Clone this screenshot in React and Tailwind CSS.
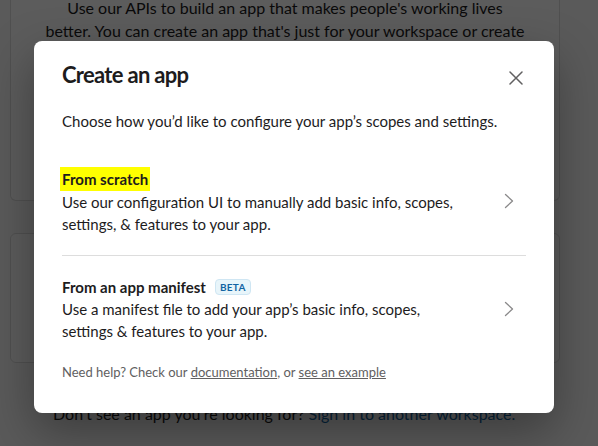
import React from "react";

function Chevron() {
  return (
    <svg width="10" height="16" viewBox="0 0 10 16" fill="none" className="shrink-0 mr-[12px]">
      <path d="M1.5 1.5L8.5 8L1.5 14.5" stroke="#8a898a" strokeWidth="1.3" strokeLinecap="round" strokeLinejoin="round" />
    </svg>
  );
}

function Option({ title, badge, desc, highlight }) {
  return (
    <button className="w-full flex items-center justify-between py-5 text-left cursor-pointer">
      <div className="w-[400px]">
        <div className="flex items-center text-[15px] leading-[22px] font-bold text-[#1d1c1d]">
          {highlight ? (
            <span className="bg-[#ffff00] px-[2px] -ml-[2px] py-[1px]">{title}</span>
          ) : (
            <span>{title}</span>
          )}
          {badge && (
            <span className="ml-[9px] h-[16px] px-[4px] flex items-center rounded-[4px] border border-[#cfe6f3] bg-[#e8f5fa] text-[#1264a3] text-[10px] font-bold tracking-[0.3px]">
              {badge}
            </span>
          )}
        </div>
        <p className="text-[15px] leading-[22px] text-[#1d1c1d]">{desc}</p>
      </div>
      <Chevron />
    </button>
  );
}

export default function App() {
  return (
    <div className="relative w-[598px] h-[446px] overflow-hidden bg-[#f8f8f8]" style={{ fontFamily: "Lato, 'Noto Sans', sans-serif" }}>
      {/* page behind the modal */}
      <div className="ml-[10px] w-[550px]">
        <div className="h-[205px] bg-white border-x border-b border-[#dddddd] rounded-b-[6px]">
          <p className="-mt-[4px] mx-auto w-[480px] text-center text-[16px] leading-[23px] text-[#1d1c1d]">
            Use our APIs to build an app that makes people's working lives better. You can create an app that's just for your workspace or create
          </p>
        </div>
        <div className="mt-[32px] h-[130px] bg-white border border-[#dddddd] rounded-[6px]"></div>
        <p className="mt-[39px] ml-[43px] text-[16px] leading-[23px] text-[#1d1c1d]">
          Don't see an app you're looking for? <span className="text-[#1264a3]">Sign in to another workspace.</span>
        </p>
      </div>

      {/* overlay */}
      <div className="absolute inset-0 bg-black/[0.64]"></div>

      {/* modal */}
      <div className="absolute left-[34px] top-[41px] w-[520px] bg-white rounded-[8px] shadow-[0_18px_48px_0_rgba(0,0,0,0.35)]">
        <div className="flex items-center justify-between px-7 pt-5">
          <h1 className="text-[22px] leading-[28px] font-bold text-[#1d1c1d] tracking-[-0.7px]">Create an app</h1>
          <button className="mr-[3px] mt-[6px] cursor-pointer">
            <svg width="14" height="14" viewBox="0 0 14 14" fill="none">
              <path d="M1 1L13 13M13 1L1 13" stroke="#616061" strokeWidth="1.5" strokeLinecap="round" />
            </svg>
          </button>
        </div>
        <div className="px-7 pb-[31px]">
          <p className="mt-[21px] mb-[15px] text-[15px] leading-[22px] text-[#1d1c1d]">
            Choose how you’d like to configure your app’s scopes and settings.
          </p>
          <Option
            highlight
            title="From scratch"
            desc="Use our configuration UI to manually add basic info, scopes, settings, & features to your app."
          />
          <div className="border-t border-[#dddddd]"></div>
          <Option
            title="From an app manifest"
            badge="BETA"
            desc="Use a manifest file to add your app’s basic info, scopes, settings & features to your app."
          />
          <p className="text-[13px] leading-[20px] text-[#616061]">
            Need help? Check our <a className="underline">documentation</a>, or <a className="underline">see an example</a>
          </p>
        </div>
      </div>
    </div>
  );
}
